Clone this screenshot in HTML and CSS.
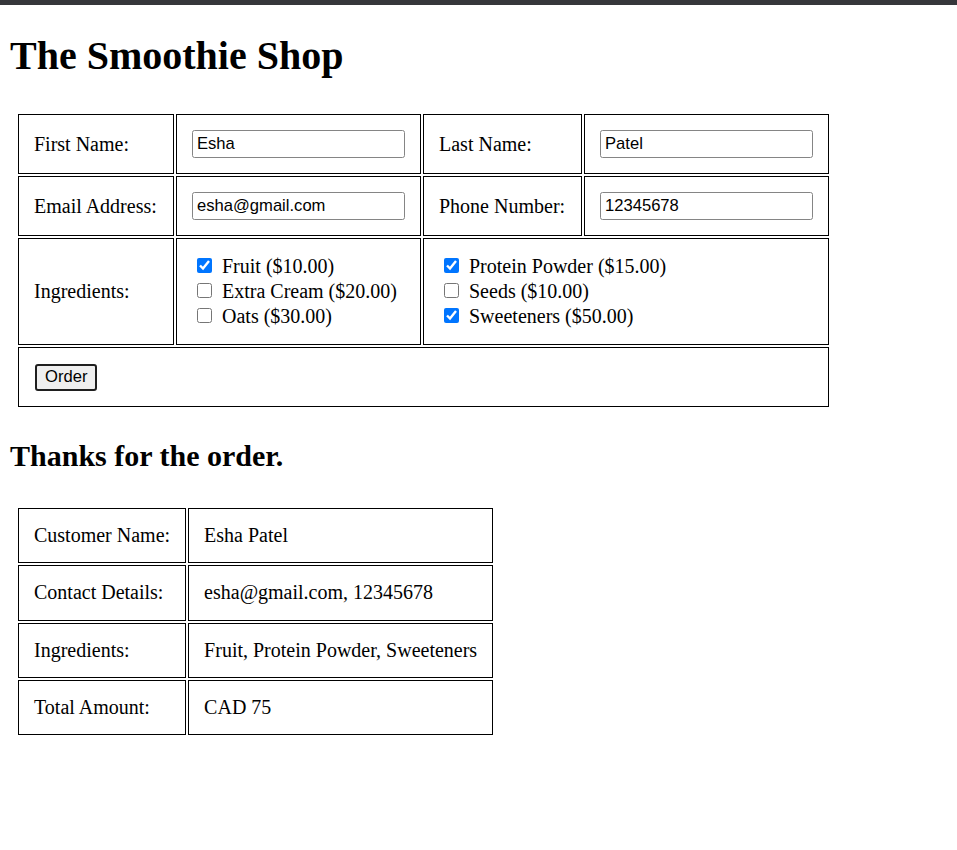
FILE: index.html
```html
<!DOCTYPE html>
<html lang="en">
<head>
<meta charset="utf-8">
<title>The Smoothie Shop</title>
<link rel="stylesheet" href="styles.css">
</head>
<body>
<div class="topbar"></div>
<main class="page">
  <h1 class="title">The Smoothie Shop</h1>
  <form class="order">
    <table class="form-table">
      <tr>
        <td class="c1">First Name:</td>
        <td class="c2"><input class="field" type="text" value="Esha"></td>
        <td class="c3">Last Name:</td>
        <td class="c4"><input class="field" type="text" value="Patel"></td>
      </tr>
      <tr>
        <td>Email Address:</td>
        <td><input class="field" type="text" value="esha@gmail.com"></td>
        <td>Phone Number:</td>
        <td><input class="field" type="text" value="12345678"></td>
      </tr>
      <tr>
        <td>Ingredients:</td>
        <td>
          <div class="opts">
            <label class="opt"><input class="check" type="checkbox" checked><span class="opt-text">Fruit ($10.00)</span></label>
            <label class="opt"><input class="check" type="checkbox"><span class="opt-text">Extra Cream ($20.00)</span></label>
            <label class="opt"><input class="check" type="checkbox"><span class="opt-text">Oats ($30.00)</span></label>
          </div>
        </td>
        <td colspan="2">
          <div class="opts">
            <label class="opt"><input class="check" type="checkbox" checked><span class="opt-text">Protein Powder ($15.00)</span></label>
            <label class="opt"><input class="check" type="checkbox"><span class="opt-text">Seeds ($10.00)</span></label>
            <label class="opt"><input class="check" type="checkbox" checked><span class="opt-text">Sweeteners ($50.00)</span></label>
          </div>
        </td>
      </tr>
      <tr>
        <td colspan="4"><button class="order-btn" type="button">Order</button></td>
      </tr>
    </table>
  </form>
  <h2 class="thanks">Thanks for the order.</h2>
  <table class="summary">
    <tr><td>Customer Name:</td><td>Esha Patel</td></tr>
    <tr><td>Contact Details:</td><td>esha@gmail.com, 12345678</td></tr>
    <tr><td>Ingredients:</td><td>Fruit, Protein Powder, Sweeteners</td></tr>
    <tr><td>Total Amount:</td><td>CAD 75</td></tr>
  </table>
</main>
</body>
</html>
```
FILE: styles.css
```css
html, body {
  margin: 0;
  padding: 0;
  background: #fff;
}
body {
  font-family: "Liberation Serif", "Times New Roman", serif;
  font-size: 20px;
  color: #000;
}
.topbar {
  height: 5px;
  background: #36373b;
}
.page {
  padding: 0 10px;
}
.title {
  font-size: 40px;
  font-weight: bold;
  margin: 27px 0 33px;
}
.order {
  margin: 0;
}
.form-table {
  table-layout: fixed;
  width: 815px;
  border-collapse: separate;
  border-spacing: 2px;
  margin: 0 6px;
}
.form-table td,
.summary td {
  border: 1px solid #000;
  padding: 15px;
  white-space: nowrap;
  box-sizing: border-box;
}
.form-table td {
  line-height: 23px;
}
.summary td {
  line-height: 23.3px;
}
.c1 { width: 156px; }
.c2 { width: 245px; }
.c3 { width: 159px; }
.c4 { width: 245px; }
.field {
  display: block;
  box-sizing: border-box;
  width: 100%;
  height: 28px;
  margin: 0;
  padding: 0 4px 1px;
  border: 1px solid #858585;
  border-radius: 2.5px;
  font-family: "Liberation Sans", Arial, sans-serif;
  font-size: 16.6px;
  color: #000;
  background: #fff;
}
.opts {
  display: flex;
  flex-direction: column;
}
.opt {
  display: flex;
  align-items: center;
  height: 25px;
}
.check {
  width: 15px;
  height: 15px;
  margin: 0 0 2px 5px;
  flex: none;
}
.opt-text {
  margin-left: 10px;
}
.order-btn {
  display: block;
  box-sizing: border-box;
  height: 27px;
  margin: 1px 0 0 1px;
  padding: 0 8px 1px;
  border: 2px solid #1f1f1f;
  border-radius: 3px;
  background: #efefef;
  font-family: "Liberation Sans", Arial, sans-serif;
  font-size: 16.6px;
  color: #000;
}
.thanks {
  font-size: 30px;
  font-weight: bold;
  margin: 30px 0 33px;
}
.summary {
  border-collapse: separate;
  border-spacing: 2.5px;
  margin: 0 6px;
}
```
